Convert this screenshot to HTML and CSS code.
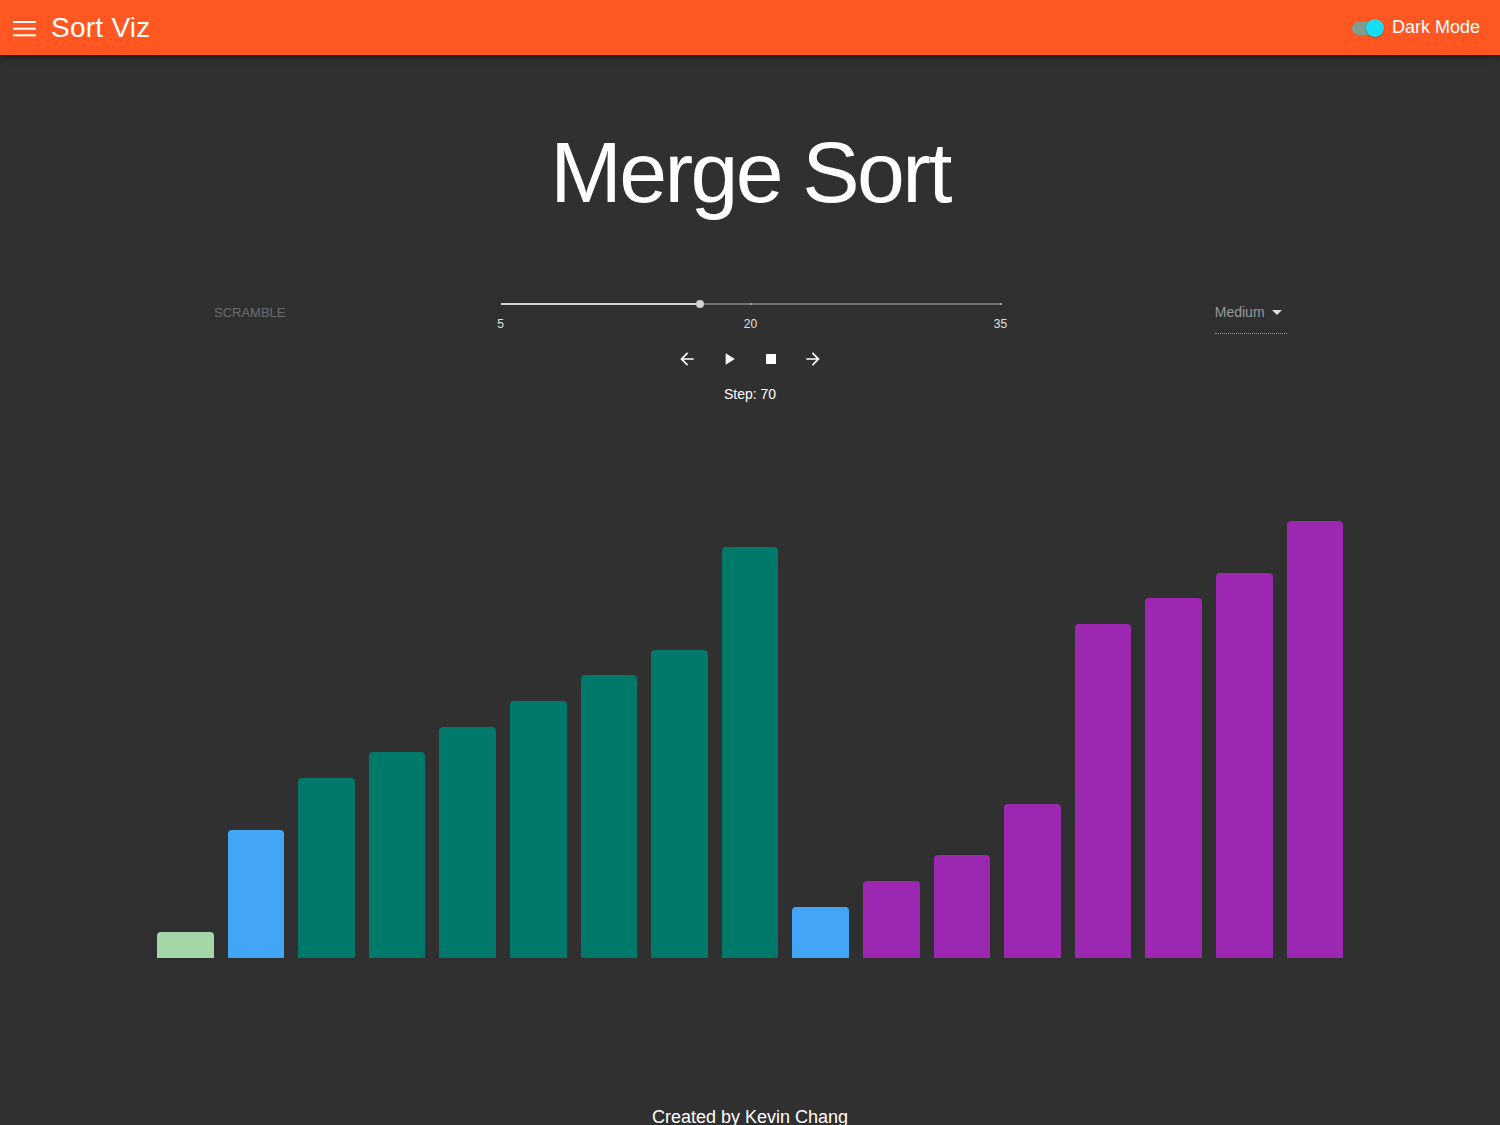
FILE: index.html
```html
<!DOCTYPE html>
<html lang="en">
<head>
<meta charset="utf-8">
<title>Sort Viz</title>
<link rel="stylesheet" href="styles.css">
</head>
<body>
<header class="appbar">
  <div class="appbar-left">
    <button class="menu-btn" aria-label="menu">
      <svg width="24" height="16" viewBox="0 0 24 16"><rect x="0" y="0" width="23" height="2" fill="#fff"/><rect x="0" y="6.7" width="23" height="2" fill="#fff"/><rect x="0" y="13.3" width="23" height="2" fill="#fff"/></svg>
    </button>
    <span class="brand">Sort Viz</span>
  </div>
  <div class="appbar-right">
    <span class="switch"><span class="switch-track"></span><span class="switch-thumb"></span></span>
    <span class="mode-label">Dark Mode</span>
  </div>
</header>

<main class="content">
  <h1 class="title">Merge Sort</h1>

  <div class="controls">
    <div class="cell cell-scramble">
      <button class="scramble" disabled>SCRAMBLE</button>
    </div>
    <div class="cell cell-slider">
      <div class="slider">
        <div class="rail"></div>
        <div class="track" style="width:39.8%"></div>
        <span class="mark" style="left:50%"></span>
        <span class="mark" style="left:100%"></span>
        <span class="thumb" style="left:39.8%"></span>
        <span class="mark-label" style="left:0%">5</span>
        <span class="mark-label" style="left:50%">20</span>
        <span class="mark-label" style="left:100%">35</span>
      </div>
    </div>
    <div class="cell cell-select">
      <div class="select">
        <span class="select-value">Medium</span>
        <svg class="select-arrow" width="10" height="5" viewBox="0 0 10 5"><path d="M0 0l5 5 5-5z" fill="#ddd"/></svg>
      </div>
    </div>
  </div>

  <div class="playback">
    <button class="icon-btn" aria-label="back"><svg width="20" height="20" viewBox="0 0 24 24"><path d="M20 11H7.83l5.59-5.59L12 4l-8 8 8 8 1.41-1.41L7.83 13H20v-2z" fill="#fff"/></svg></button>
    <button class="icon-btn" aria-label="play"><svg width="20" height="20" viewBox="0 0 24 24"><path d="M8 5v14l11-7z" fill="#fff"/></svg></button>
    <button class="icon-btn" aria-label="stop"><svg width="20" height="20" viewBox="0 0 24 24"><path d="M6 6h12v12H6z" fill="#fff"/></svg></button>
    <button class="icon-btn" aria-label="forward"><svg width="20" height="20" viewBox="0 0 24 24"><path d="M12 4l-1.41 1.41L16.17 11H4v2h12.17l-5.58 5.59L12 20l8-8z" fill="#fff"/></svg></button>
  </div>

  <div class="step">Step: 70</div>

  <div class="bars">
    <div class="bar sorted" style="height:25.7px"></div>
    <div class="bar compare" style="height:128.5px"></div>
    <div class="bar left" style="height:179.9px"></div>
    <div class="bar left" style="height:205.6px"></div>
    <div class="bar left" style="height:231.3px"></div>
    <div class="bar left" style="height:257px"></div>
    <div class="bar left" style="height:282.7px"></div>
    <div class="bar left" style="height:308.4px"></div>
    <div class="bar left" style="height:411.2px"></div>
    <div class="bar compare" style="height:51.4px"></div>
    <div class="bar right" style="height:77.1px"></div>
    <div class="bar right" style="height:102.8px"></div>
    <div class="bar right" style="height:154.2px"></div>
    <div class="bar right" style="height:334.1px"></div>
    <div class="bar right" style="height:359.8px"></div>
    <div class="bar right" style="height:385.5px"></div>
    <div class="bar right" style="height:436.9px"></div>
  </div>

  <footer class="footer">Created by Kevin Chang</footer>
</main>
</body>
</html>
```

FILE: styles.css
```css
* { box-sizing: border-box; }

html, body {
  margin: 0;
  padding: 0;
  background: #303030;
  color: #fff;
  font-family: "Liberation Sans", Arial, sans-serif;
  height: 1125px;
  overflow: hidden;
}

.appbar {
  height: 55px;
  background: #ff5722;
  display: flex;
  align-items: center;
  justify-content: space-between;
  padding: 0 20px 0 13px;
  box-shadow: 0 2px 4px -1px rgba(0,0,0,0.2), 0 4px 5px 0 rgba(0,0,0,0.14), 0 1px 10px 0 rgba(0,0,0,0.12);
  position: relative;
  z-index: 1;
}

.appbar-left {
  display: flex;
  align-items: center;
}

.menu-btn {
  background: none;
  border: 0;
  padding: 0;
  margin: 2px 14px 0 0;
  display: flex;
  cursor: pointer;
}

.brand {
  font-size: 28px;
  letter-spacing: 0.25px;
  color: #fff;
  line-height: 1;
}

.appbar-right {
  display: flex;
  align-items: center;
}

.switch {
  position: relative;
  width: 33px;
  height: 20px;
  margin-right: 7px;
  display: inline-block;
}

.switch-track {
  position: absolute;
  left: 0;
  top: 4px;
  width: 28px;
  height: 13px;
  border-radius: 7px;
  background: rgba(0, 229, 255, 0.5);
}

.switch-thumb {
  position: absolute;
  left: 14px;
  top: 1px;
  width: 18px;
  height: 18px;
  border-radius: 50%;
  background: #18dcf8;
  box-shadow: 0 1px 2px rgba(0,0,0,0.25);
}

.mode-label {
  font-size: 18px;
  color: #fff;
}

.content {
  display: flex;
  flex-direction: column;
  align-items: center;
}

.title {
  margin: 74px 0 0;
  font-size: 86px;
  line-height: 86px;
  font-weight: 400;
  letter-spacing: -2.6px;
  color: #fff;
}

.controls {
  margin-top: 75px;
  width: 100%;
  height: 48px;
  display: grid;
  grid-template-columns: 1fr 1fr 1fr;
}

.cell {
  display: flex;
  justify-content: center;
  align-items: flex-start;
}

.scramble {
  margin-top: 14px;
  background: none;
  border: 0;
  padding: 0 8px;
  font-family: "Liberation Sans", Arial, sans-serif;
  font-size: 13px;
  line-height: 18px;
  color: rgba(255,255,255,0.3);
}

.slider {
  position: relative;
  width: 500px;
  height: 48px;
  margin-left: 1px;
}

.rail {
  position: absolute;
  left: 0;
  right: 0;
  top: 13px;
  height: 2px;
  background: rgba(255,255,255,0.3);
}

.track {
  position: absolute;
  left: 0;
  top: 13px;
  height: 2px;
  background: #d0d0d0;
}

.mark {
  position: absolute;
  top: 13px;
  width: 2px;
  height: 2px;
  margin-left: -1px;
  background: #9a9a9a;
}

.thumb {
  position: absolute;
  top: 10px;
  width: 8px;
  height: 8px;
  margin-left: -4px;
  border-radius: 50%;
  background: #cfcfcf;
}

.mark-label {
  position: absolute;
  top: 27px;
  font-size: 12px;
  line-height: 14px;
  color: #e0e0e0;
  transform: translateX(-50%);
}

.select {
  margin-top: 12px;
  width: 72px;
  height: 32px;
  display: flex;
  align-items: flex-start;
  border-bottom: 1px dotted rgba(255,255,255,0.5);
  margin-left: 1px;
}

.select-value {
  font-size: 14px;
  line-height: 20px;
  color: rgba(255,255,255,0.5);
}

.select-arrow {
  margin: 8px 0 0 7px;
}

.playback {
  display: flex;
  gap: 0;
}

.icon-btn {
  width: 42px;
  height: 42px;
  padding: 0;
  border: 0;
  background: none;
  display: flex;
  align-items: center;
  justify-content: center;
  cursor: pointer;
}

.step {
  margin-top: 6px;
  font-size: 14px;
  line-height: 16px;
  color: #fff;
}

.bars {
  margin-top: 96px;
  width: 1200px;
  height: 460px;
  display: flex;
  align-items: flex-end;
}

.bar {
  flex: 1;
  margin: 0 7px;
  border-radius: 4px 4px 0 0;
}

.bar.sorted { background: #a5d6a7; }
.bar.compare { background: #42a5f5; }
.bar.left { background: #00796b; }
.bar.right { background: #9c27b0; }

.footer {
  margin-top: 149px;
  font-size: 18px;
  line-height: 21px;
  color: #fff;
}
```
